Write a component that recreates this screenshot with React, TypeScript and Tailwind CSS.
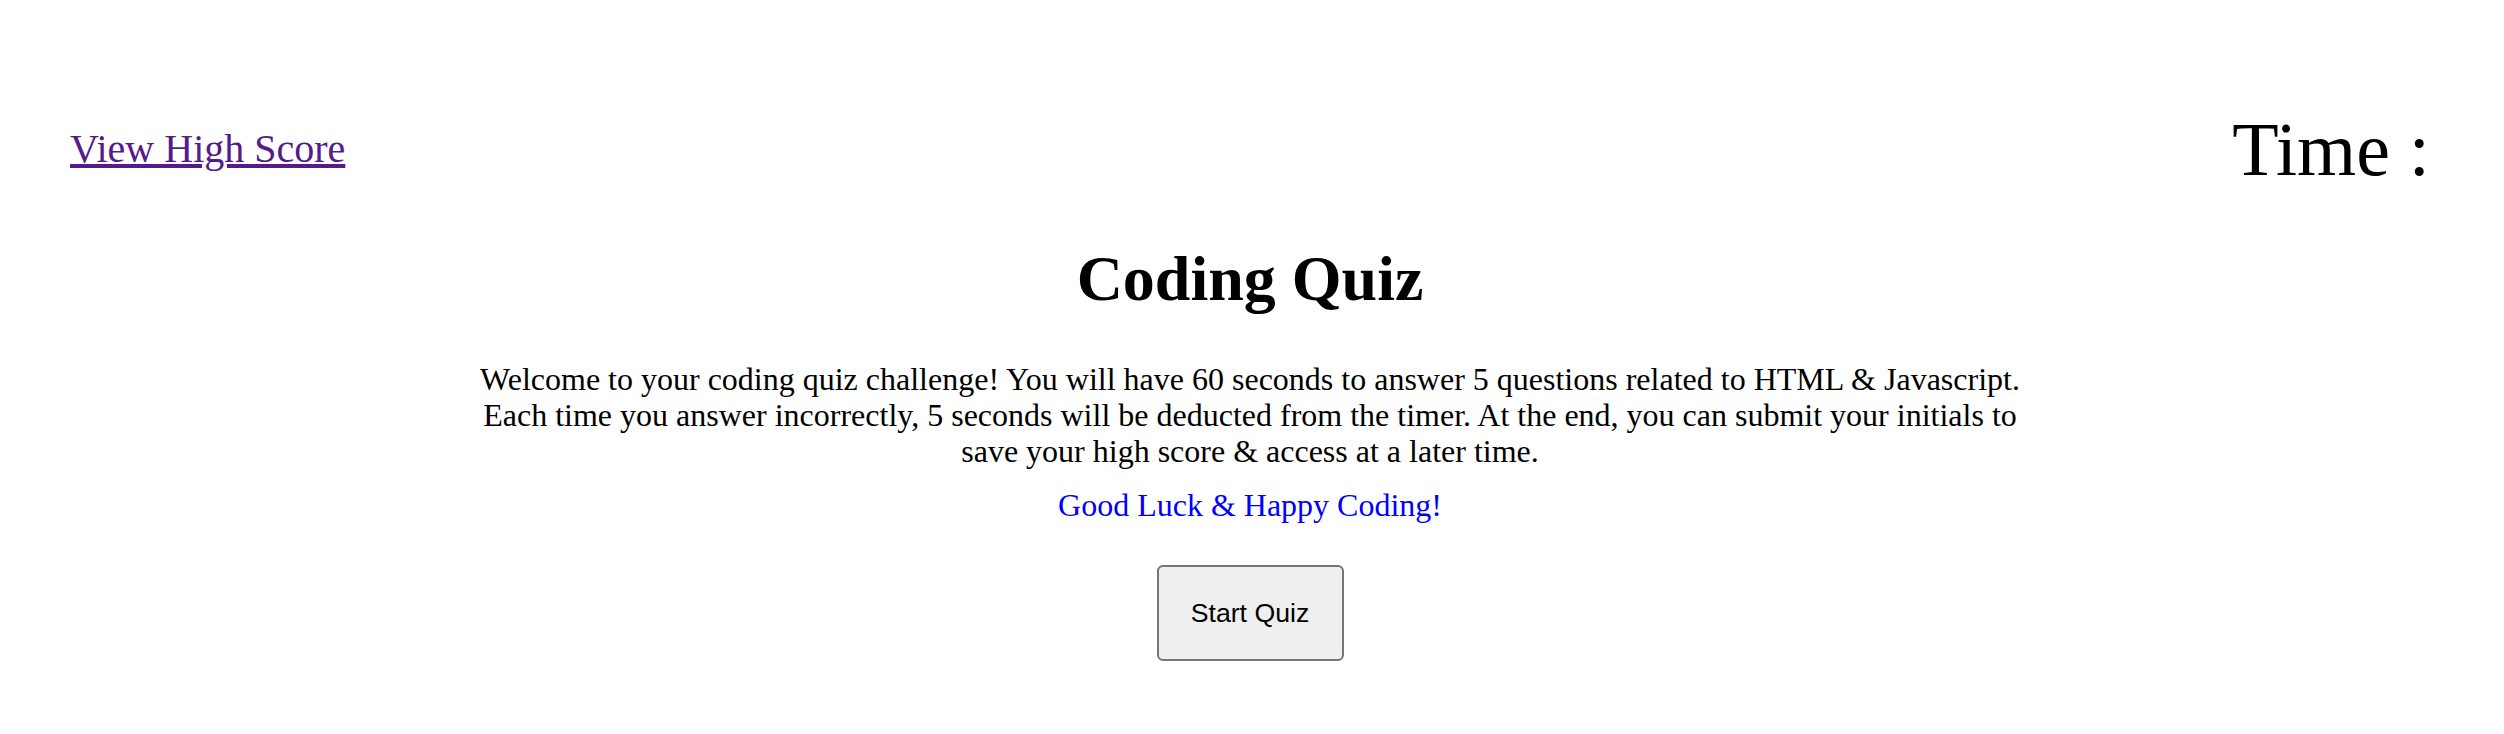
import React from "react";

const serif = "font-['Liberation_Serif','Times_New_Roman',serif]";

const App: React.FC = () => {
    return (
        <div className={`min-h-screen bg-white text-black ${serif}`}>
            <header className="flex items-start justify-between pl-[70px] pr-[74px] pt-[106px]">
                <a href="#" className="mt-[20px] text-[40px] leading-[46px] text-[#551a8b] underline">
                    View High Score
                </a>
                <div className="text-[76px] leading-[87px]">
                    Time : <span id="timer"></span>
                </div>
            </header>
            <main className="flex flex-col items-center pr-[4px] text-center">
                <h1 className="mt-[49px] text-[64px] font-bold leading-[74px]">Coding Quiz</h1>
                <p className="mt-[45px] text-[32px] leading-[36px]">
                    Welcome to your coding quiz challenge! You will have 60 seconds to answer 5 questions related to HTML &amp; Javascript.
                    <br />
                    Each time you answer incorrectly, 5 seconds will be deducted from the timer. At the end, you can submit your initials to
                    <br />
                    save your high score &amp; access at a later time.
                </p>
                <p className="mt-[18px] text-[32px] leading-[36px] text-[#0000ff]">Good Luck &amp; Happy Coding!</p>
                <button className="mt-[42px] h-[96px] w-[187px] rounded-[6px] border-2 border-[#767676] bg-[#efefef] font-['Liberation_Sans',Arial,sans-serif] text-[26.67px] text-black">
                    Start Quiz
                </button>
            </main>
        </div>
    );
};

export default App;
